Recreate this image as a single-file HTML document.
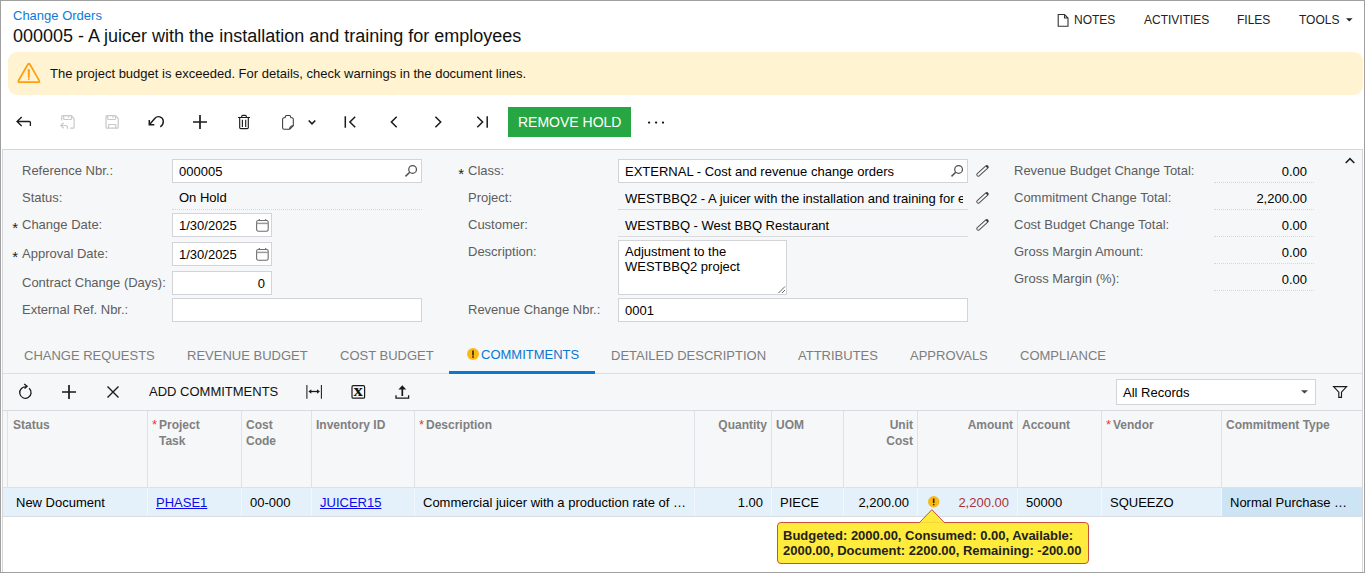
<!DOCTYPE html>
<html lang="en">
<head>
<meta charset="utf-8">
<title>Change Orders</title>
<style>
*{box-sizing:border-box;margin:0;padding:0}
html,body{width:1365px;height:573px;overflow:hidden;background:#fff}
body{font-family:"Liberation Sans",Arial,sans-serif;font-size:13px;color:#000;position:relative}
.abs,.abs *{position:absolute}
#frame{position:absolute;left:0;top:0;width:1365px;height:573px;border:1px solid #a0a0a0;z-index:50;pointer-events:none}
.t{position:absolute;white-space:nowrap;line-height:16px;height:16px}
.lbl{color:#5d5d5d}
.inp{position:absolute;background:#fff;border:1px solid #d2d4d7;height:24px}
.ro{position:absolute;border-bottom:1px solid #d9dbde;height:24px}
.dot{position:absolute;border-bottom:1px dotted #d6d8db;height:1px}
svg{position:absolute;overflow:visible}
.hd{position:absolute;top:417px;font-size:12px;font-weight:bold;color:#808080;line-height:16px;white-space:nowrap}
.vl{position:absolute;top:411px;width:1px;height:77px;background:#dfe1e4}
.vr{position:absolute;top:488px;width:1px;height:28px;background:#f1f7fc}
.c{position:absolute;top:495px;line-height:16px;white-space:nowrap}
.tab{position:absolute;top:348px;line-height:16px;color:#7d7d7d;white-space:nowrap}
a{color:#0a0aee;text-decoration:underline}
</style>
</head>
<body>
<div id="frame"></div>

<!-- header -->
<div class="t" style="left:13px;top:8px;color:#0a7bd8">Change Orders</div>
<div class="t" style="left:13px;top:25px;font-size:18px;line-height:22px;height:22px;color:#111">000005 - A juicer with the installation and training for employees</div>

<div class="t" style="left:1074px;top:12px;font-size:12px;color:#222">NOTES</div>
<div class="t" style="left:1144px;top:12px;font-size:12px;color:#222">ACTIVITIES</div>
<div class="t" style="left:1237px;top:12px;font-size:12px;color:#222">FILES</div>
<div class="t" style="left:1299px;top:12px;font-size:12px;color:#222">TOOLS</div>
<svg style="left:1057px;top:13px" width="13" height="15" viewBox="0 0 13 15"><path d="M1.200 1.500h6.300l3.500 3.500v8.300h-9.800z M7.500 1.500v3.500h3.500" fill="none" stroke="#333" stroke-width="1.100"/></svg>
<svg style="left:1346px;top:18px" width="7" height="4" viewBox="0 0 7 4"><path d="M0 0.300h6.600l-3.300 3.300z" fill="#222"/></svg>

<!-- banner -->
<div style="position:absolute;left:8px;top:52px;width:1355px;height:43px;background:#fff3d1;border-radius:9px"></div>
<svg style="left:17px;top:62px" width="24" height="22" viewBox="0 0 24 22"><path d="M10.800 2.500Q11.900 0.600 13 2.500L22.100 18.300Q23.200 20.200 21 20.200L2.800 20.200Q0.600 20.200 1.700 18.300Z" fill="none" stroke="#ff9f10" stroke-width="1.700" stroke-linejoin="round"/><path d="M10.600 7.200h2.400l-0.400 8.700h-1.600z" fill="#ff9f10"/><circle cx="11.800" cy="17.300" r="0.950" fill="#ff9f10"/></svg>
<div class="t" style="left:50px;top:66px;color:#111">The project budget is exceeded. For details, check warnings in the document lines.</div>

<!-- toolbar -->
<svg id="tb" style="left:0;top:100px" width="700" height="48" viewBox="0 100 700 48" fill="none" stroke="#1a1a1a" stroke-width="1.300">
 <!-- back -->
 <path d="M21.700 117L17 121.500L21.700 126 M16.800 121.500H29.300Q30.400 121.500 30.400 122.600V126"/>
 <!-- save & close (disabled) -->
 <g stroke="#c9c9c9" stroke-width="1.200">
  <path d="M61.700 120.600v-3.900a1 1 0 0 1 1 -1h8.600l2.800 2.800v8.700a1 1 0 0 1 -1 1h-3"/><path d="M63.700 115.700v3a0.800 0.800 0 0 0 0.800 0.800h6.200a0.800 0.800 0 0 0 0.800 -0.800v-3"/><path d="M68.600 116.300v1.400" stroke-width="1.400"/><path d="M60.800 125.500h4.500a2.200 2.200 0 0 1 2.200 2.200v1 M63.700 122.700l-2.900 2.800l2.900 2.800"/>
  <path d="M106 116.700a1 1 0 0 1 1 -1h8.400l2.800 2.800v8.700a1 1 0 0 1 -1 1h-10.200a1 1 0 0 1 -1 -1z"/><path d="M107.700 115.700v3a0.800 0.800 0 0 0 0.800 0.800h6.200a0.800 0.800 0 0 0 0.800 -0.800v-3"/><path d="M112.900 116.300v1.400" stroke-width="1.400"/><path d="M108.600 128.200v-3.100a0.600 0.600 0 0 1 0.600 -0.600h6a0.600 0.600 0 0 1 0.600 0.600v3.100"/>
 </g>
 <!-- undo -->
 <path d="M149.500 124.500L155 118.200C157.300 115.600 163 116.200 163.300 121.300C163.400 123.700 162.300 125.600 160.300 126.900" stroke-width="1.400"/><path d="M149.300 120v4.700h5" stroke-width="1.500"/>
 <!-- plus -->
 <path d="M193 122h14 M200 115v14" stroke-width="1.700"/>
 <!-- trash -->
 <path d="M238 117.500h12 M241.700 117.500v-1a1.200 1.200 0 0 1 1.200 -1.200h2.200a1.200 1.200 0 0 1 1.200 1.200v1 M239.700 117.500v10a1.100 1.100 0 0 0 1.100 1.100h6.400a1.100 1.100 0 0 0 1.100 -1.100v-10 M242.400 119.700v7.300 M245.700 119.700v7.300" stroke-width="1.150"/>
 <!-- clipboard -->
 <path d="M285.300 117.700h-1.200a1.500 1.500 0 0 0 -1.500 1.500v8.600a1.500 1.500 0 0 0 1.500 1.500h5.600l3.600 -3.600v-6.500a1.500 1.500 0 0 0 -1.500 -1.500h-1.200 M285.300 117.700v-0.800a1.300 1.300 0 0 1 1.300 -1.300h2.800a1.300 1.300 0 0 1 1.300 1.300v0.800 M289.500 129.300c0.300-2.800 1-3.400 3.800-3.700" stroke="#3a3a3a" stroke-width="1.050"/>
 <path d="M308.700 120.500l3.300 3.300l3.300-3.300" stroke-width="1.600"/>
 <!-- first -->
 <path d="M345.300 116.200v11.600 M355.200 116.700l-5.300 5.300l5.300 5.300" stroke-width="1.500"/>
 <!-- prev -->
 <path d="M396.700 116.700l-5.300 5.300l5.300 5.300" stroke-width="1.500"/>
 <!-- next -->
 <path d="M435.400 116.700l5.300 5.300l-5.300 5.300" stroke-width="1.500"/>
 <!-- last -->
 <path d="M477.300 116.700l5.300 5.300l-5.300 5.300 M487.200 116.200v11.600" stroke-width="1.500"/>
</svg>
<div style="position:absolute;left:508px;top:107px;width:123px;height:30px;background:#27a744"></div>
<div class="t" style="left:518px;top:114px;font-size:14px;color:#fff">REMOVE HOLD</div>
<svg style="left:640px;top:115px" width="32" height="16" viewBox="640 115 32 16"><circle cx="649.100" cy="122.550" r="1.150" fill="#111"/><circle cx="656.100" cy="122.550" r="1.150" fill="#111"/><circle cx="663" cy="122.550" r="1.150" fill="#111"/></svg>

<!-- form panel -->
<div style="position:absolute;left:2px;top:149px;width:1361px;height:424px;background:#f5f7f9;border:1px solid #d5d7da;border-bottom:none"></div>

<!-- col 1 -->
<div class="t lbl" style="left:22px;top:163px">Reference Nbr.:</div>
<div class="t lbl" style="left:22px;top:190px">Status:</div>
<div class="t lbl" style="left:22px;top:217px">Change Date:</div>
<div class="t lbl" style="left:22px;top:246px">Approval Date:</div>
<div class="t lbl" style="left:22px;top:275px">Contract Change (Days):</div>
<div class="t lbl" style="left:22px;top:302px">External Ref. Nbr.:</div>
<div class="t" style="left:12.300px;top:220.400px;font-size:15px;color:#222">*</div>
<div class="t" style="left:12.300px;top:249.400px;font-size:15px;color:#222">*</div>

<div class="inp" style="left:172px;top:159px;width:250px"></div>
<div class="t" style="left:179px;top:164px">000005</div>
<svg style="left:404px;top:164px" width="14" height="14" viewBox="0 0 14 14"><circle cx="8.600" cy="5.400" r="3.850" fill="none" stroke="#505050" stroke-width="1.250"/><path d="M5.700 8.300L1.500 12.400" stroke="#505050" stroke-width="1.500"/></svg>
<div class="dot" style="left:172px;top:209px;width:250px"></div>
<div class="t" style="left:179px;top:190px">On Hold</div>
<div class="inp" style="left:172px;top:213px;width:100px"></div>
<div class="t" style="left:179px;top:218px">1/30/2025</div>
<div class="inp" style="left:172px;top:242px;width:100px"></div>
<div class="t" style="left:179px;top:247px">1/30/2025</div>
<svg style="left:255px;top:219px" width="14" height="14" viewBox="0 0 14 14"><rect x="1.600" y="1.500" width="11.600" height="10.700" rx="1.700" fill="none" stroke="#6e6e6e" stroke-width="1.100"/><path d="M1.600 4.400h11.600" stroke="#9a9a9a" stroke-width="1.500" fill="none"/><path d="M4.300 0v1.500 M10.700 0v1.500" stroke="#6e6e6e" stroke-width="1.100" fill="none"/></svg>
<svg style="left:255px;top:248px" width="14" height="14" viewBox="0 0 14 14"><rect x="1.600" y="1.500" width="11.600" height="10.700" rx="1.700" fill="none" stroke="#6e6e6e" stroke-width="1.100"/><path d="M1.600 4.400h11.600" stroke="#9a9a9a" stroke-width="1.500" fill="none"/><path d="M4.300 0v1.500 M10.700 0v1.500" stroke="#6e6e6e" stroke-width="1.100" fill="none"/></svg>
<div class="inp" style="left:172px;top:271px;width:100px"></div>
<div class="t" style="left:172px;top:276px;width:93px;text-align:right">0</div>
<div class="inp" style="left:172px;top:298px;width:250px"></div>

<!-- col 2 -->
<div class="t" style="left:458.300px;top:166.400px;font-size:15px;color:#222">*</div>
<div class="t lbl" style="left:468px;top:163px">Class:</div>
<div class="t lbl" style="left:468px;top:190px">Project:</div>
<div class="t lbl" style="left:468px;top:217px">Customer:</div>
<div class="t lbl" style="left:468px;top:244px">Description:</div>
<div class="t lbl" style="left:468px;top:302px">Revenue Change Nbr.:</div>

<div class="inp" style="left:618px;top:159px;width:350px"></div>
<div class="t" style="left:625px;top:164px">EXTERNAL - Cost and revenue change orders</div>
<svg style="left:950px;top:164px" width="14" height="14" viewBox="0 0 14 14"><circle cx="8.600" cy="5.400" r="3.850" fill="none" stroke="#505050" stroke-width="1.250"/><path d="M5.700 8.300L1.500 12.400" stroke="#505050" stroke-width="1.500"/></svg>
<div class="ro" style="left:618px;top:186px;width:350px"></div>
<div class="t" style="left:625px;top:191px;width:338px;overflow:hidden">WESTBBQ2 - A juicer with the installation and training for employees</div>
<div class="ro" style="left:618px;top:213px;width:350px"></div>
<div class="t" style="left:625px;top:218px">WESTBBQ - West BBQ Restaurant</div>
<div class="inp" style="left:618px;top:240px;width:169px;height:55px"></div>
<div class="t" style="left:625px;top:244px;line-height:15px;height:30px;white-space:normal;width:150px">Adjustment to the WESTBBQ2 project</div>
<svg style="left:777px;top:285px" width="9" height="9" viewBox="0 0 9 9"><path d="M8 1.500l-6.500 6.500 M8 5l-3 3" stroke="#666" stroke-width="1" fill="none"/></svg>
<div class="inp" style="left:618px;top:298px;width:350px"></div>
<div class="t" style="left:625px;top:303px">0001</div>

<svg style="left:976px;top:164px" width="14" height="14" viewBox="0 0 14 14"><g transform="translate(6.500,6.900) rotate(-42)"><rect x="-7.200" y="-1.450" width="14.400" height="2.900" rx="1.450" fill="none" stroke="#505050" stroke-width="1"/><path d="M5.400 -1.350h0.500a1.350 1.350 0 0 1 0 2.700h-0.500z" fill="#333"/></g></svg>
<svg style="left:976px;top:191px" width="14" height="14" viewBox="0 0 14 14"><g transform="translate(6.500,6.900) rotate(-42)"><rect x="-7.200" y="-1.450" width="14.400" height="2.900" rx="1.450" fill="none" stroke="#505050" stroke-width="1"/><path d="M5.400 -1.350h0.500a1.350 1.350 0 0 1 0 2.700h-0.500z" fill="#333"/></g></svg>
<svg style="left:976px;top:218px" width="14" height="14" viewBox="0 0 14 14"><g transform="translate(6.500,6.900) rotate(-42)"><rect x="-7.200" y="-1.450" width="14.400" height="2.900" rx="1.450" fill="none" stroke="#505050" stroke-width="1"/><path d="M5.400 -1.350h0.500a1.350 1.350 0 0 1 0 2.700h-0.500z" fill="#333"/></g></svg>

<!-- col 3 -->
<div class="t lbl" style="left:1014px;top:163px">Revenue Budget Change Total:</div>
<div class="t lbl" style="left:1014px;top:190px">Commitment Change Total:</div>
<div class="t lbl" style="left:1014px;top:217px">Cost Budget Change Total:</div>
<div class="t lbl" style="left:1014px;top:244px">Gross Margin Amount:</div>
<div class="t lbl" style="left:1014px;top:271px">Gross Margin (%):</div>
<div class="t" style="left:1214px;top:164px;width:93px;text-align:right">0.00</div>
<div class="t" style="left:1214px;top:191px;width:93px;text-align:right">2,200.00</div>
<div class="t" style="left:1214px;top:218px;width:93px;text-align:right">0.00</div>
<div class="t" style="left:1214px;top:245px;width:93px;text-align:right">0.00</div>
<div class="t" style="left:1214px;top:272px;width:93px;text-align:right">0.00</div>
<div class="dot" style="left:1214px;top:182px;width:100px"></div>
<div class="dot" style="left:1214px;top:209px;width:100px"></div>
<div class="dot" style="left:1214px;top:236px;width:100px"></div>
<div class="dot" style="left:1214px;top:263px;width:100px"></div>
<div class="dot" style="left:1214px;top:290px;width:100px"></div>
<svg style="left:1344.500px;top:157px" width="10" height="7" viewBox="0 0 10 7"><path d="M0.700 6l4.300-4.300l4.300 4.300" fill="none" stroke="#222" stroke-width="1.600"/></svg>

<!-- tabs -->
<div class="tab" style="left:24px">CHANGE REQUESTS</div>
<div class="tab" style="left:187px">REVENUE BUDGET</div>
<div class="tab" style="left:340px">COST BUDGET</div>
<div class="tab" style="left:481px;top:347px;color:#0a78d1">COMMITMENTS</div>
<div class="tab" style="left:611px">DETAILED DESCRIPTION</div>
<div class="tab" style="left:798px">ATTRIBUTES</div>
<div class="tab" style="left:910px">APPROVALS</div>
<div class="tab" style="left:1020px">COMPLIANCE</div>
<svg style="left:467px;top:347.850px" width="12" height="12" viewBox="0 0 12 12"><circle cx="6" cy="6" r="6" fill="#fbb914"/><path d="M6 2.600v4.800" stroke="#3a2a00" stroke-width="1.700"/><circle cx="6" cy="9" r="0.900" fill="#3a2a00"/></svg>
<div style="position:absolute;left:3px;top:373px;width:1359px;height:1px;background:#dcdee1"></div>
<div style="position:absolute;left:449px;top:371px;width:146px;height:3px;background:#0a78d1"></div>

<!-- grid toolbar -->
<svg style="left:0;top:378px" width="1365" height="30" viewBox="0 378 1365 30" fill="none" stroke="#1a1a1a" stroke-width="1.300">
 <path d="M29.070 388.230A5.700 5.700 0 1 1 26.500 387" stroke-width="1.300"/><path d="M24.200 384.100L27.100 386.300L24.500 388.500" stroke-width="1.300"/>
 <path d="M62 392h14 M69 385v14" stroke-width="1.700"/>
 <path d="M107.500 386.500l11 11 M118.500 386.500l-11 11" stroke-width="1.400"/>
 <path d="M306.900 385v13.800 M321.400 385v13.800" stroke-width="1.050"/><path d="M310 391.500h8.300" stroke-width="1.300"/><path d="M308.400 391.500l2.900-2.300v4.600z M319.900 391.500l-2.900-2.300v4.600z" fill="#1a1a1a" stroke="none"/>
 <rect x="352" y="385.700" width="12.600" height="12.500" rx="1.300" stroke-width="1.200"/>
 <path d="M396 395.200v3h12.600v-3" stroke-width="1.300"/><path d="M402.300 396v-7.500" stroke-width="1.700"/><path d="M402.300 385.300l3.900 4.200h-7.800z" fill="#1a1a1a" stroke="none"/>
 <path d="M1333.600 386.600H1346.600L1341.500 392.200V397.400H1338.800V392.200Z" stroke-width="1.150"/>
</svg>
<div class="t" style="left:354.200px;top:379.300px;font-family:'Liberation Serif',serif;font-weight:bold;font-size:16.500px;line-height:24px;height:24px;color:#111;transform:scaleX(1.14);transform-origin:50% 50%">x</div>
<div class="t" style="left:149px;top:384px;color:#111">ADD COMMITMENTS</div>
<div class="inp" style="left:1116px;top:379px;width:200px;height:26px"></div>
<div class="t" style="left:1123px;top:385px">All Records</div>
<svg style="left:1301px;top:390px" width="7" height="4" viewBox="0 0 7 4"><path d="M0 0.200h7l-3.500 3.400z" fill="#444"/></svg>

<!-- grid -->
<div style="position:absolute;left:3px;top:410px;width:1359px;height:1px;background:#d9dbde"></div>
<div style="position:absolute;left:3px;top:411px;width:1359px;height:77px;background:#f5f7f9"></div>
<div style="position:absolute;left:3px;top:516px;width:1359px;height:56px;background:#fff"></div>
<div class="vl" style="left:7px"></div>
<div class="vl" style="left:147px"></div>
<div class="vl" style="left:241px"></div>
<div class="vl" style="left:311px"></div>
<div class="vl" style="left:414px"></div>
<div class="vl" style="left:694px"></div>
<div class="vl" style="left:771px"></div>
<div class="vl" style="left:843px"></div>
<div class="vl" style="left:917px"></div>
<div class="vl" style="left:1017px"></div>
<div class="vl" style="left:1101px"></div>
<div class="vl" style="left:1221px"></div>

<div class="hd" style="left:13px">Status</div>
<div class="hd" style="left:159px">Project<br>Task</div>
<div class="hd" style="left:246px">Cost<br>Code</div>
<div class="hd" style="left:316px">Inventory ID</div>
<div class="hd" style="left:426px">Description</div>
<div class="hd" style="left:694px;width:73px;text-align:right">Quantity</div>
<div class="hd" style="left:776px">UOM</div>
<div class="hd" style="left:843px;width:70px;text-align:right">Unit<br>Cost</div>
<div class="hd" style="left:917px;width:96px;text-align:right">Amount</div>
<div class="hd" style="left:1022px">Account</div>
<div class="hd" style="left:1113px">Vendor</div>
<div class="hd" style="left:1226px">Commitment Type</div>
<div class="hd" style="left:152px;color:#e53935;font-weight:normal;font-size:13px">*</div>
<div class="hd" style="left:419px;color:#e53935;font-weight:normal;font-size:13px">*</div>
<div class="hd" style="left:1106px;color:#e53935;font-weight:normal;font-size:13px">*</div>

<!-- row -->
<div style="position:absolute;left:3px;top:488px;width:1359px;height:28px;background:#e4f1fa"></div>
<div style="position:absolute;left:1222px;top:488px;width:140px;height:28px;background:#cde4f4"></div>
<div style="position:absolute;left:3px;top:487px;width:1359px;height:1px;background:#dfe1e4"></div>
<div style="position:absolute;left:3px;top:516px;width:1359px;height:1px;background:#d9dee3"></div>
<div class="vr" style="left:147px"></div>
<div class="vr" style="left:241px"></div>
<div class="vr" style="left:311px"></div>
<div class="vr" style="left:414px"></div>
<div class="vr" style="left:694px"></div>
<div class="vr" style="left:771px"></div>
<div class="vr" style="left:843px"></div>
<div class="vr" style="left:917px"></div>
<div class="vr" style="left:1017px"></div>
<div class="vr" style="left:1101px"></div>
<div class="vr" style="left:1221px"></div>

<div class="c" style="left:16px">New Document</div>
<div class="c" style="left:156px"><a>PHASE1</a></div>
<div class="c" style="left:250px">00-000</div>
<div class="c" style="left:320px"><a>JUICER15</a></div>
<div class="c" style="left:423px">Commercial juicer with a production rate of …</div>
<div class="c" style="left:694px;width:69px;text-align:right">1.00</div>
<div class="c" style="left:780px">PIECE</div>
<div class="c" style="left:843px;width:66px;text-align:right">2,200.00</div>
<div class="c" style="left:917px;width:92px;text-align:right;color:#a83240">2,200.00</div>
<div class="c" style="left:1026px">50000</div>
<div class="c" style="left:1110px">SQUEEZO</div>
<div class="c" style="left:1230px">Normal Purchase …</div>
<svg style="left:928.100px;top:495.600px" width="11.400" height="11.400" viewBox="0 0 12 12"><circle cx="6" cy="6" r="6" fill="#fbb914"/><path d="M6 2.600v4.800" stroke="#3a2a00" stroke-width="1.700"/><circle cx="6" cy="9" r="0.900" fill="#3a2a00"/></svg>

<!-- tooltip -->
<div style="position:absolute;left:777px;top:522px;width:312px;height:42px;background:#ffeb3b;border:1px solid #c8503c;border-radius:4px"></div>
<svg style="left:918px;top:508px" width="28" height="16" viewBox="0 0 28 16"><path d="M1.500 14.500L13.900 1.700L26.300 14.500" fill="#ffeb3b" stroke="#c8503c" stroke-width="1"/><path d="M2 15h24" stroke="#ffeb3b" stroke-width="1.400"/></svg>
<div class="t" style="left:783px;top:528px;font-weight:bold;line-height:15px;height:30px;color:#222">Budgeted: 2000.00, Consumed: 0.00, Available:<br>2000.00, Document: 2200.00, Remaining: -200.00</div>

</body>
</html>
